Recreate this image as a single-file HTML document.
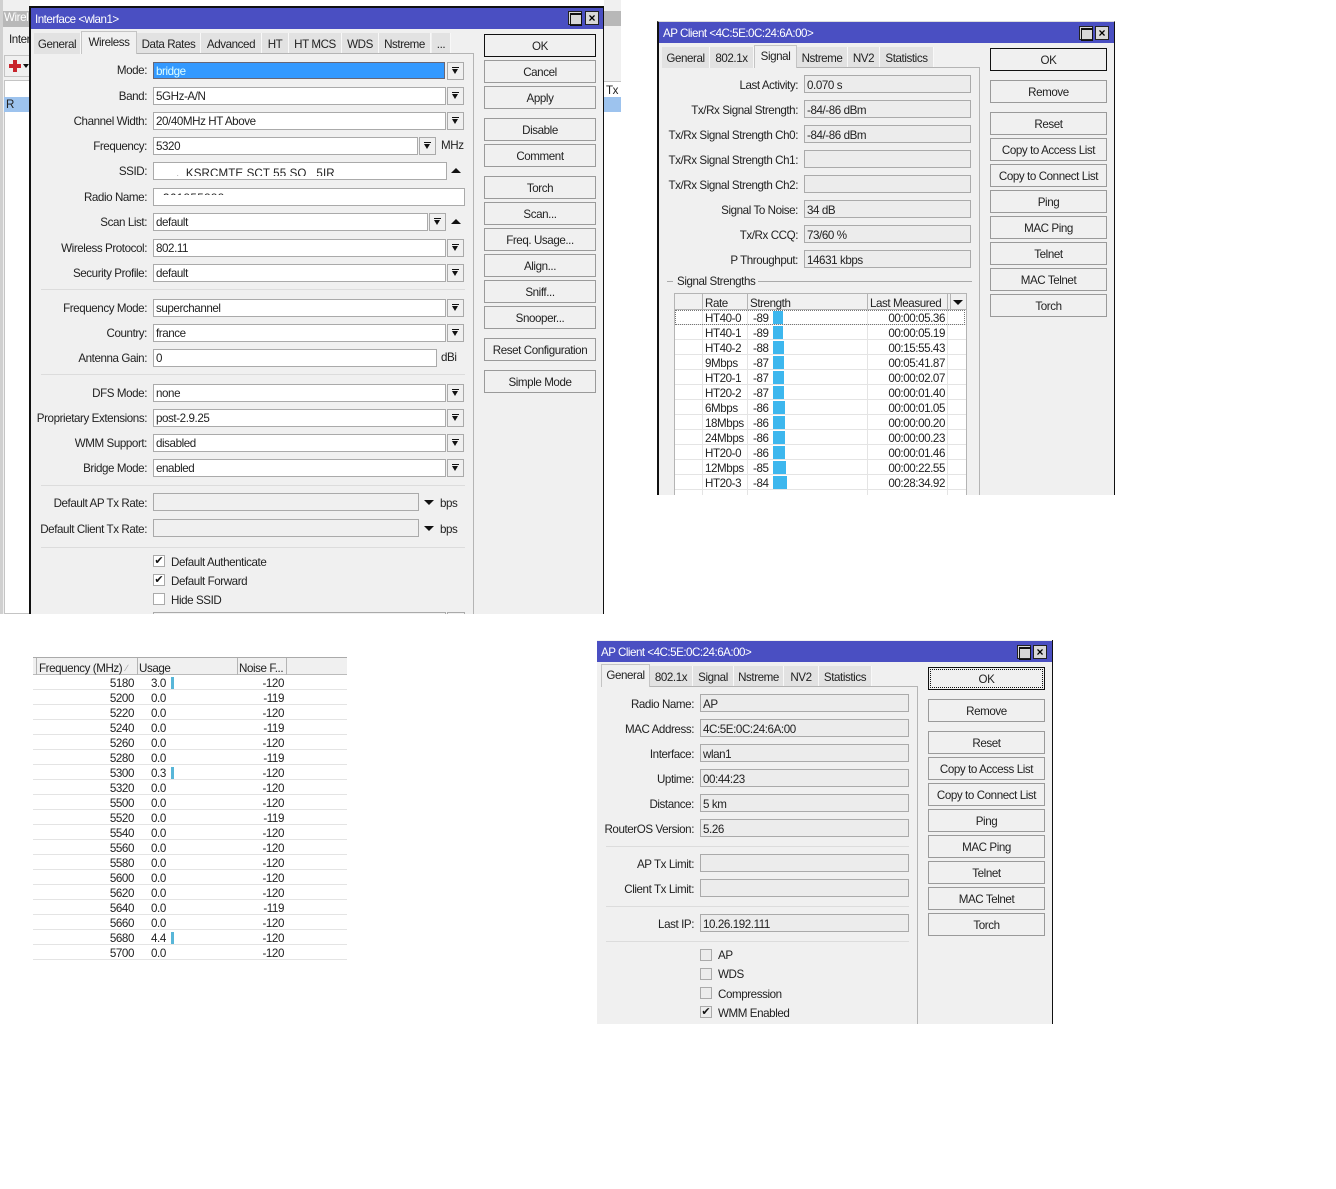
<!DOCTYPE html>
<html><head><meta charset="utf-8"><title>MikroTik Wireless</title>
<style>
html,body{margin:0;padding:0;background:#fff}
#p{position:relative;width:1336px;height:1189px;overflow:hidden;background:#fff;font:11.6px/17px "Liberation Sans",sans-serif;letter-spacing:-.42px;color:#222}
#p div,#p span.a{position:absolute;box-sizing:border-box;white-space:nowrap}
.bg{background:#f0f0f0}
.tb{background:#4a4fc2;color:#fff;padding-left:4px;line-height:24px;font-size:11.6px;letter-spacing:-.5px}
.t{background:#e2e2e2;border-right:1px solid #f8f8f8;text-align:center;line-height:23px;height:21px}
.ta{background:#f0f0f0;text-align:center;line-height:22px;height:23px;border:1px solid #c4c4c4;border-bottom:0;z-index:2}
.l{left:0;text-align:right;height:18px;line-height:20px}
.f{background:#fff;border:1px solid #aaa;height:18px;line-height:17px;padding-left:2px;overflow:hidden}
.r{background:#ececec;border:1px solid #aaa;height:18px;line-height:19px;padding-left:2px;overflow:hidden}
.d{background:#f0f0f0;border:1px solid #aaa;height:18px;width:17px}
.d:before{content:"";position:absolute;left:4px;top:4px;width:7px;height:1px;background:#111}
.d:after{content:"";position:absolute;left:4px;top:6px;border:3.5px solid transparent;border-top:5px solid #111;border-bottom:0}
.up{width:0;height:0;border:5px solid transparent;border-bottom:5px solid #111;border-top:0}
.dn{width:0;height:0;border:5px solid transparent;border-top:5px solid #111;border-bottom:0}
.b{background:#f0f0f0;border:1px solid #9a9a9a;height:23px;line-height:23px;text-align:center;color:#222}
.s{background:#dcdcdc;height:1px}
.v{background:#b4b4b4;width:1px}
.c{width:12px;height:12px;background:#fff;border:1px solid #aaa;font-size:11px;line-height:10px;text-align:center;color:#111;letter-spacing:0}
.w{width:14px;height:14px;background:#d8d8d8;border:1px solid #222}
.w:before{content:"";position:absolute;left:1px;top:1px;width:10px;height:10px;border:1px solid #111;border-top-width:2px}
.x{width:14px;height:14px;background:#d8d8d8;border:1px solid #222;text-align:center;line-height:12px;font-weight:bold;font-size:12px;color:#000;letter-spacing:0}
.rw{height:15px;line-height:15px;background:#fff;border-bottom:1px solid #e4e4e4}
.bar{background:#3db7ee;height:13px;top:1px}
.ub{background:#58b6d8;width:3px;height:12px}
</style></head><body><div id="p">

<!-- background window -->
<div class="bg" style="left:0;top:0;width:30px;height:614px"></div>
<div class="bg" style="left:604px;top:0;width:17px;height:112px"></div>
<div style="left:0;top:11px;width:30px;height:16px;background:#b8b8b8;color:#fff;padding-left:4px;line-height:14px">Wirel</div>
<div style="left:604px;top:11px;width:17px;height:15px;background:#b8b8b8"></div>
<div style="left:0;top:0;width:3px;height:614px;background:#d0d0d0"></div>
<div style="left:9px;top:31px">Inter</div>
<div style="left:4px;top:55px;width:26px;height:22px;background:#f0f0f0;border:1px solid #c4c4c4"></div>
<div style="left:9px;top:64px;width:12px;height:4px;background:#c8242c"></div>
<div style="left:13px;top:60px;width:4px;height:12px;background:#c8242c"></div>
<div class="dn" style="left:23px;top:64px;border-width:3px;border-top-width:4px"></div>
<div style="left:4px;top:80px;width:26px;height:534px;background:#fff;border:1px solid #c4c4c4"></div>
<div style="left:4px;top:97px;width:26px;height:15px;background:#9dc3ee;padding-left:2px;line-height:15px">R</div>
<div style="left:604px;top:81px;width:17px;height:16px;background:#fff;border-top:1px solid #c4c4c4;padding-left:2px">Tx</div>
<div style="left:604px;top:97px;width:17px;height:15px;background:#9dc3ee"></div>

<!-- Interface window -->
<div class="bg" style="left:29px;top:6px;width:575px;height:608px;border:2px solid #111;border-bottom:0;border-right-width:1px;border-left-width:2px"></div>
<div class="tb" style="left:31px;top:8px;width:572px;height:21px;line-height:24px">Interface &lt;wlan1&gt;</div>
<div class="w" style="left:568px;top:11px"></div><div class="x" style="left:585px;top:11px">×</div>
<div class="t" style="left:34px;top:33px;width:47px">General</div>
<div class="ta" style="left:81px;top:31px;width:56px">Wireless</div>
<div class="t" style="left:137px;top:33px;width:64px">Data Rates</div>
<div class="t" style="left:201px;top:33px;width:61px">Advanced</div>
<div class="t" style="left:262px;top:33px;width:27px">HT</div>
<div class="t" style="left:289px;top:33px;width:53px">HT MCS</div>
<div class="t" style="left:342px;top:33px;width:37px">WDS</div>
<div class="t" style="left:379px;top:33px;width:52px">Nstreme</div>
<div class="t" style="left:432px;top:33px;width:19px">...</div>
<div class="s" style="left:137px;top:53px;width:337px;background:#b4b4b4"></div>
<div class="v" style="left:473px;top:53px;height:561px"></div>

<div class="l" style="top:61px;width:147px">Mode:</div>
<div class="f" style="left:153px;top:62px;width:292px;height:17px;background:#3399ff;color:#fff;border-color:#667"><span style="color:#dff">bridge</span></div><div class="d" style="left:447px;top:62px"></div>
<div class="l" style="top:87px;width:147px">Band:</div>
<div class="f" style="left:153px;top:87px;width:293px">5GHz-A/N</div><div class="d" style="left:447px;top:87px"></div>
<div class="l" style="top:112px;width:147px">Channel Width:</div>
<div class="f" style="left:153px;top:112px;width:293px">20/40MHz HT Above</div><div class="d" style="left:447px;top:112px"></div>
<div class="l" style="top:137px;width:147px">Frequency:</div>
<div class="f" style="left:153px;top:137px;width:265px">5320</div><div class="d" style="left:419px;top:137px"></div>
<div style="left:441px;top:137px">MHz</div>
<div class="l" style="top:162px;width:147px">SSID:</div>
<div class="f" style="left:153px;top:162px;width:294px"></div>
<div style="left:176px;top:167px;width:160px;height:9px;overflow:hidden;line-height:13px;letter-spacing:.1px">._KSRCMTE SCT 55 SO_ 5IR</div>
<div class="up" style="left:451px;top:168px"></div>
<div class="l" style="top:188px;width:147px">Radio Name:</div>
<div class="f" style="left:153px;top:188px;width:312px"></div>
<div style="left:163px;top:192px;width:80px;height:3px;overflow:hidden;line-height:13px;letter-spacing:.4px">361855888</div>
<div class="l" style="top:213px;width:147px">Scan List:</div>
<div class="f" style="left:153px;top:213px;width:275px">default</div><div class="d" style="left:429px;top:213px"></div>
<div class="up" style="left:451px;top:219px"></div>
<div class="l" style="top:239px;width:147px">Wireless Protocol:</div>
<div class="f" style="left:153px;top:239px;width:293px">802.11</div><div class="d" style="left:447px;top:239px"></div>
<div class="l" style="top:264px;width:147px">Security Profile:</div>
<div class="f" style="left:153px;top:264px;width:293px">default</div><div class="d" style="left:447px;top:264px"></div>
<div class="s" style="left:41px;top:289px;width:424px"></div>
<div class="l" style="top:299px;width:147px">Frequency Mode:</div>
<div class="f" style="left:153px;top:299px;width:293px">superchannel</div><div class="d" style="left:447px;top:299px"></div>
<div class="l" style="top:324px;width:147px">Country:</div>
<div class="f" style="left:153px;top:324px;width:293px">france</div><div class="d" style="left:447px;top:324px"></div>
<div class="l" style="top:349px;width:147px">Antenna Gain:</div>
<div class="f" style="left:153px;top:349px;width:284px">0</div>
<div style="left:441px;top:349px">dBi</div>
<div class="s" style="left:41px;top:374px;width:424px"></div>
<div class="l" style="top:384px;width:147px">DFS Mode:</div>
<div class="f" style="left:153px;top:384px;width:293px">none</div><div class="d" style="left:447px;top:384px"></div>
<div class="l" style="top:409px;width:147px">Proprietary Extensions:</div>
<div class="f" style="left:153px;top:409px;width:293px">post-2.9.25</div><div class="d" style="left:447px;top:409px"></div>
<div class="l" style="top:434px;width:147px">WMM Support:</div>
<div class="f" style="left:153px;top:434px;width:293px">disabled</div><div class="d" style="left:447px;top:434px"></div>
<div class="l" style="top:459px;width:147px">Bridge Mode:</div>
<div class="f" style="left:153px;top:459px;width:293px">enabled</div><div class="d" style="left:447px;top:459px"></div>
<div class="s" style="left:41px;top:485px;width:424px"></div>
<div class="l" style="top:494px;width:147px">Default AP Tx Rate:</div>
<div class="r" style="left:153px;top:493px;width:266px;background:#f0f0f0"></div>
<div class="dn" style="left:424px;top:500px"></div><div style="left:440px;top:495px">bps</div>
<div class="l" style="top:520px;width:147px">Default Client Tx Rate:</div>
<div class="r" style="left:153px;top:519px;width:266px;background:#f0f0f0"></div>
<div class="dn" style="left:424px;top:526px"></div><div style="left:440px;top:521px">bps</div>
<div class="s" style="left:41px;top:547px;width:424px"></div>
<div class="c" style="left:153px;top:555px">✔</div><div style="left:171px;top:554px">Default Authenticate</div>
<div class="c" style="left:153px;top:574px">✔</div><div style="left:171px;top:573px">Default Forward</div>
<div class="c" style="left:153px;top:593px"></div><div style="left:171px;top:592px">Hide SSID</div>
<div class="f" style="left:153px;top:612px;width:293px;height:2px;border-bottom:0;background:#f0f0f0"></div>
<div class="f" style="left:447px;top:612px;width:18px;height:2px;border-bottom:0;background:#f0f0f0"></div>

<div class="b" style="left:484px;top:34px;width:112px;border-color:#111">OK</div>
<div class="b" style="left:484px;top:60px;width:112px">Cancel</div>
<div class="b" style="left:484px;top:86px;width:112px">Apply</div>
<div class="b" style="left:484px;top:118px;width:112px">Disable</div>
<div class="b" style="left:484px;top:144px;width:112px">Comment</div>
<div class="b" style="left:484px;top:176px;width:112px">Torch</div>
<div class="b" style="left:484px;top:202px;width:112px">Scan...</div>
<div class="b" style="left:484px;top:228px;width:112px">Freq. Usage...</div>
<div class="b" style="left:484px;top:254px;width:112px">Align...</div>
<div class="b" style="left:484px;top:280px;width:112px">Sniff...</div>
<div class="b" style="left:484px;top:306px;width:112px">Snooper...</div>
<div class="b" style="left:484px;top:338px;width:112px">Reset Configuration</div>
<div class="b" style="left:484px;top:370px;width:112px">Simple Mode</div>

<!-- AP Client Signal -->
<div class="bg" style="left:657px;top:21px;width:458px;height:474px;border-left:2px solid #111;border-right:1px solid #111;border-top:1px solid #ddd"></div>
<div class="tb" style="left:659px;top:22px;width:455px;height:21px">AP Client &lt;4C:5E:0C:24:6A:00&gt;</div>
<div class="w" style="left:1079px;top:26px"></div><div class="x" style="left:1095px;top:26px">×</div>
<div class="t" style="left:662px;top:47px;width:48px">General</div>
<div class="t" style="left:710px;top:47px;width:44px">802.1x</div>
<div class="ta" style="left:754px;top:45px;width:43px">Signal</div>
<div class="t" style="left:797px;top:47px;width:51px">Nstreme</div>
<div class="t" style="left:848px;top:47px;width:32px">NV2</div>
<div class="t" style="left:880px;top:47px;width:54px">Statistics</div>
<div class="s" style="left:797px;top:67px;width:183px;background:#b4b4b4"></div>
<div class="v" style="left:979px;top:67px;height:428px"></div>

<div class="l" style="top:76px;width:798px">Last Activity:</div><div class="r" style="left:804px;top:75px;width:167px">0.070 s</div>
<div class="l" style="top:101px;width:798px">Tx/Rx Signal Strength:</div><div class="r" style="left:804px;top:100px;width:167px">-84/-86 dBm</div>
<div class="l" style="top:126px;width:798px">Tx/Rx Signal Strength Ch0:</div><div class="r" style="left:804px;top:125px;width:167px">-84/-86 dBm</div>
<div class="l" style="top:151px;width:798px">Tx/Rx Signal Strength Ch1:</div><div class="r" style="left:804px;top:150px;width:167px"></div>
<div class="l" style="top:176px;width:798px">Tx/Rx Signal Strength Ch2:</div><div class="r" style="left:804px;top:175px;width:167px"></div>
<div class="l" style="top:201px;width:798px">Signal To Noise:</div><div class="r" style="left:804px;top:200px;width:167px">34 dB</div>
<div class="l" style="top:226px;width:798px">Tx/Rx CCQ:</div><div class="r" style="left:804px;top:225px;width:167px">73/60 %</div>
<div class="l" style="top:251px;width:798px">P Throughput:</div><div class="r" style="left:804px;top:250px;width:167px">14631 kbps</div>

<div class="s" style="left:667px;top:281px;width:6px;background:#aaa"></div>
<div style="left:677px;top:273px">Signal Strengths</div>
<div class="s" style="left:758px;top:281px;width:214px;background:#aaa"></div>

<div style="left:674px;top:293px;width:293px;height:202px;background:#fff;border:1px solid #b4b4b4;border-bottom:0"></div>
<div style="left:675px;top:294px;width:291px;height:16px;background:#f0f0f0;border-bottom:1px solid #b4b4b4"></div>
<div class="v" style="left:702px;top:294px;height:16px"></div>
<div class="v" style="left:747px;top:294px;height:16px"></div>
<div class="v" style="left:867px;top:294px;height:16px"></div>
<div class="v" style="left:947px;top:294px;height:16px"></div>
<div class="v" style="left:950px;top:294px;height:16px"></div>
<div style="left:705px;top:295px">Rate</div>
<div style="left:750px;top:295px">Strength</div>
<div style="left:870px;top:295px">Last Measured</div>
<div class="dn" style="left:953px;top:300px"></div>

<div class="rw" style="left:675px;top:310px;width:291px"></div>
<div class="rw" style="left:675px;top:325px;width:291px"></div>
<div class="rw" style="left:675px;top:340px;width:291px"></div>
<div class="rw" style="left:675px;top:355px;width:291px"></div>
<div class="rw" style="left:675px;top:370px;width:291px"></div>
<div class="rw" style="left:675px;top:385px;width:291px"></div>
<div class="rw" style="left:675px;top:400px;width:291px"></div>
<div class="rw" style="left:675px;top:415px;width:291px"></div>
<div class="rw" style="left:675px;top:430px;width:291px"></div>
<div class="rw" style="left:675px;top:445px;width:291px"></div>
<div class="rw" style="left:675px;top:460px;width:291px"></div>
<div class="rw" style="left:675px;top:475px;width:291px"></div>
<div class="v" style="left:702px;top:310px;height:185px;background:#e4e4e4"></div>
<div class="v" style="left:747px;top:310px;height:185px;background:#e4e4e4"></div>
<div class="v" style="left:867px;top:310px;height:185px;background:#e4e4e4"></div>
<div class="v" style="left:947px;top:310px;height:185px;background:#e4e4e4"></div>
<div style="left:675px;top:310px;width:290px;height:15px;border:1px dotted #777"></div>

<div style="left:705px;top:310px">HT40-0</div><div style="left:753px;top:310px">-89</div><div class="bar" style="left:773px;top:311px;width:10px"></div><div style="left:845px;width:100px;text-align:right;top:310px">00:00:05.36</div>
<div style="left:705px;top:325px">HT40-1</div><div style="left:753px;top:325px">-89</div><div class="bar" style="left:773px;top:326px;width:10px"></div><div style="left:845px;width:100px;text-align:right;top:325px">00:00:05.19</div>
<div style="left:705px;top:340px">HT40-2</div><div style="left:753px;top:340px">-88</div><div class="bar" style="left:773px;top:341px;width:11px"></div><div style="left:845px;width:100px;text-align:right;top:340px">00:15:55.43</div>
<div style="left:705px;top:355px">9Mbps</div><div style="left:753px;top:355px">-87</div><div class="bar" style="left:773px;top:356px;width:11px"></div><div style="left:845px;width:100px;text-align:right;top:355px">00:05:41.87</div>
<div style="left:705px;top:370px">HT20-1</div><div style="left:753px;top:370px">-87</div><div class="bar" style="left:773px;top:371px;width:11px"></div><div style="left:845px;width:100px;text-align:right;top:370px">00:00:02.07</div>
<div style="left:705px;top:385px">HT20-2</div><div style="left:753px;top:385px">-87</div><div class="bar" style="left:773px;top:386px;width:11px"></div><div style="left:845px;width:100px;text-align:right;top:385px">00:00:01.40</div>
<div style="left:705px;top:400px">6Mbps</div><div style="left:753px;top:400px">-86</div><div class="bar" style="left:773px;top:401px;width:12px"></div><div style="left:845px;width:100px;text-align:right;top:400px">00:00:01.05</div>
<div style="left:705px;top:415px">18Mbps</div><div style="left:753px;top:415px">-86</div><div class="bar" style="left:773px;top:416px;width:12px"></div><div style="left:845px;width:100px;text-align:right;top:415px">00:00:00.20</div>
<div style="left:705px;top:430px">24Mbps</div><div style="left:753px;top:430px">-86</div><div class="bar" style="left:773px;top:431px;width:12px"></div><div style="left:845px;width:100px;text-align:right;top:430px">00:00:00.23</div>
<div style="left:705px;top:445px">HT20-0</div><div style="left:753px;top:445px">-86</div><div class="bar" style="left:773px;top:446px;width:12px"></div><div style="left:845px;width:100px;text-align:right;top:445px">00:00:01.46</div>
<div style="left:705px;top:460px">12Mbps</div><div style="left:753px;top:460px">-85</div><div class="bar" style="left:773px;top:461px;width:13px"></div><div style="left:845px;width:100px;text-align:right;top:460px">00:00:22.55</div>
<div style="left:705px;top:475px">HT20-3</div><div style="left:753px;top:475px">-84</div><div class="bar" style="left:773px;top:476px;width:14px"></div><div style="left:845px;width:100px;text-align:right;top:475px">00:28:34.92</div>

<div class="b" style="left:990px;top:48px;width:117px;border-color:#111">OK</div>
<div class="b" style="left:990px;top:80px;width:117px">Remove</div>
<div class="b" style="left:990px;top:112px;width:117px">Reset</div>
<div class="b" style="left:990px;top:138px;width:117px">Copy to Access List</div>
<div class="b" style="left:990px;top:164px;width:117px">Copy to Connect List</div>
<div class="b" style="left:990px;top:190px;width:117px">Ping</div>
<div class="b" style="left:990px;top:216px;width:117px">MAC Ping</div>
<div class="b" style="left:990px;top:242px;width:117px">Telnet</div>
<div class="b" style="left:990px;top:268px;width:117px">MAC Telnet</div>
<div class="b" style="left:990px;top:294px;width:117px">Torch</div>

<!-- Frequency usage -->
<div style="left:33px;top:657px;width:314px;height:18px;background:#f0f0f0;border-top:1px solid #aaa;border-bottom:1px solid #bbb"></div>
<div class="v" style="left:36px;top:658px;height:17px"></div>
<div class="v" style="left:137px;top:658px;height:17px"></div>
<div class="v" style="left:237px;top:658px;height:17px"></div>
<div class="v" style="left:286px;top:658px;height:17px"></div>
<div style="left:39px;top:660px">Frequency (MHz)</div><div style="left:126px;top:660px;color:#999;font-size:9px">∕</div>
<div style="left:139px;top:660px">Usage</div>
<div style="left:239px;top:660px">Noise F...</div>
<div class="v" style="left:137px;top:675px;height:285px;background:#e4e4e4"></div>
<div class="v" style="left:237px;top:675px;height:285px;background:#e4e4e4"></div>

<div class="rw" style="left:33px;top:675px;width:314px"></div><div style="left:84px;width:50px;text-align:right;top:675px">5180</div><div style="left:151px;top:675px">3.0</div><div class="ub" style="left:171px;top:677px"></div><div style="left:234px;width:50px;text-align:right;top:675px">-120</div>
<div class="rw" style="left:33px;top:690px;width:314px"></div><div style="left:84px;width:50px;text-align:right;top:690px">5200</div><div style="left:151px;top:690px">0.0</div><div style="left:234px;width:50px;text-align:right;top:690px">-119</div>
<div class="rw" style="left:33px;top:705px;width:314px"></div><div style="left:84px;width:50px;text-align:right;top:705px">5220</div><div style="left:151px;top:705px">0.0</div><div style="left:234px;width:50px;text-align:right;top:705px">-120</div>
<div class="rw" style="left:33px;top:720px;width:314px"></div><div style="left:84px;width:50px;text-align:right;top:720px">5240</div><div style="left:151px;top:720px">0.0</div><div style="left:234px;width:50px;text-align:right;top:720px">-119</div>
<div class="rw" style="left:33px;top:735px;width:314px"></div><div style="left:84px;width:50px;text-align:right;top:735px">5260</div><div style="left:151px;top:735px">0.0</div><div style="left:234px;width:50px;text-align:right;top:735px">-120</div>
<div class="rw" style="left:33px;top:750px;width:314px"></div><div style="left:84px;width:50px;text-align:right;top:750px">5280</div><div style="left:151px;top:750px">0.0</div><div style="left:234px;width:50px;text-align:right;top:750px">-119</div>
<div class="rw" style="left:33px;top:765px;width:314px"></div><div style="left:84px;width:50px;text-align:right;top:765px">5300</div><div style="left:151px;top:765px">0.3</div><div class="ub" style="left:171px;top:767px"></div><div style="left:234px;width:50px;text-align:right;top:765px">-120</div>
<div class="rw" style="left:33px;top:780px;width:314px"></div><div style="left:84px;width:50px;text-align:right;top:780px">5320</div><div style="left:151px;top:780px">0.0</div><div style="left:234px;width:50px;text-align:right;top:780px">-120</div>
<div class="rw" style="left:33px;top:795px;width:314px"></div><div style="left:84px;width:50px;text-align:right;top:795px">5500</div><div style="left:151px;top:795px">0.0</div><div style="left:234px;width:50px;text-align:right;top:795px">-120</div>
<div class="rw" style="left:33px;top:810px;width:314px"></div><div style="left:84px;width:50px;text-align:right;top:810px">5520</div><div style="left:151px;top:810px">0.0</div><div style="left:234px;width:50px;text-align:right;top:810px">-119</div>
<div class="rw" style="left:33px;top:825px;width:314px"></div><div style="left:84px;width:50px;text-align:right;top:825px">5540</div><div style="left:151px;top:825px">0.0</div><div style="left:234px;width:50px;text-align:right;top:825px">-120</div>
<div class="rw" style="left:33px;top:840px;width:314px"></div><div style="left:84px;width:50px;text-align:right;top:840px">5560</div><div style="left:151px;top:840px">0.0</div><div style="left:234px;width:50px;text-align:right;top:840px">-120</div>
<div class="rw" style="left:33px;top:855px;width:314px"></div><div style="left:84px;width:50px;text-align:right;top:855px">5580</div><div style="left:151px;top:855px">0.0</div><div style="left:234px;width:50px;text-align:right;top:855px">-120</div>
<div class="rw" style="left:33px;top:870px;width:314px"></div><div style="left:84px;width:50px;text-align:right;top:870px">5600</div><div style="left:151px;top:870px">0.0</div><div style="left:234px;width:50px;text-align:right;top:870px">-120</div>
<div class="rw" style="left:33px;top:885px;width:314px"></div><div style="left:84px;width:50px;text-align:right;top:885px">5620</div><div style="left:151px;top:885px">0.0</div><div style="left:234px;width:50px;text-align:right;top:885px">-120</div>
<div class="rw" style="left:33px;top:900px;width:314px"></div><div style="left:84px;width:50px;text-align:right;top:900px">5640</div><div style="left:151px;top:900px">0.0</div><div style="left:234px;width:50px;text-align:right;top:900px">-119</div>
<div class="rw" style="left:33px;top:915px;width:314px"></div><div style="left:84px;width:50px;text-align:right;top:915px">5660</div><div style="left:151px;top:915px">0.0</div><div style="left:234px;width:50px;text-align:right;top:915px">-120</div>
<div class="rw" style="left:33px;top:930px;width:314px"></div><div style="left:84px;width:50px;text-align:right;top:930px">5680</div><div style="left:151px;top:930px">4.4</div><div class="ub" style="left:171px;top:932px"></div><div style="left:234px;width:50px;text-align:right;top:930px">-120</div>
<div class="rw" style="left:33px;top:945px;width:314px"></div><div style="left:84px;width:50px;text-align:right;top:945px">5700</div><div style="left:151px;top:945px">0.0</div><div style="left:234px;width:50px;text-align:right;top:945px">-120</div>

<!-- AP Client General -->
<div class="bg" style="left:597px;top:640px;width:456px;height:384px;border-right:1px solid #111"></div>
<div class="tb" style="left:597px;top:641px;width:455px;height:21px">AP Client &lt;4C:5E:0C:24:6A:00&gt;</div>
<div class="w" style="left:1017px;top:645px"></div><div class="x" style="left:1033px;top:645px">×</div>
<div class="ta" style="left:601px;top:664px;width:49px">General</div>
<div class="t" style="left:650px;top:666px;width:43px">802.1x</div>
<div class="t" style="left:693px;top:666px;width:41px">Signal</div>
<div class="t" style="left:734px;top:666px;width:50px">Nstreme</div>
<div class="t" style="left:784px;top:666px;width:35px">NV2</div>
<div class="t" style="left:819px;top:666px;width:53px">Statistics</div>
<div class="s" style="left:650px;top:686px;width:268px;background:#b4b4b4"></div>
<div class="v" style="left:917px;top:686px;height:338px"></div>

<div class="l" style="top:695px;width:694px">Radio Name:</div><div class="r" style="left:700px;top:694px;width:209px">AP</div>
<div class="l" style="top:720px;width:694px">MAC Address:</div><div class="r" style="left:700px;top:719px;width:209px">4C:5E:0C:24:6A:00</div>
<div class="l" style="top:745px;width:694px">Interface:</div><div class="r" style="left:700px;top:744px;width:209px">wlan1</div>
<div class="l" style="top:770px;width:694px">Uptime:</div><div class="r" style="left:700px;top:769px;width:209px">00:44:23</div>
<div class="l" style="top:795px;width:694px">Distance:</div><div class="r" style="left:700px;top:794px;width:209px">5 km</div>
<div class="l" style="top:820px;width:694px">RouterOS Version:</div><div class="r" style="left:700px;top:819px;width:209px">5.26</div>
<div class="s" style="left:606px;top:846px;width:303px"></div>
<div class="l" style="top:855px;width:694px">AP Tx Limit:</div><div class="r" style="left:700px;top:854px;width:209px"></div>
<div class="l" style="top:880px;width:694px">Client Tx Limit:</div><div class="r" style="left:700px;top:879px;width:209px"></div>
<div class="s" style="left:606px;top:906px;width:303px"></div>
<div class="l" style="top:915px;width:694px">Last IP:</div><div class="r" style="left:700px;top:914px;width:209px">10.26.192.111</div>
<div class="s" style="left:606px;top:941px;width:303px"></div>
<div class="c" style="left:700px;top:949px;background:#ececec"></div><div style="left:718px;top:947px">AP</div>
<div class="c" style="left:700px;top:968px;background:#ececec"></div><div style="left:718px;top:966px">WDS</div>
<div class="c" style="left:700px;top:987px;background:#ececec"></div><div style="left:718px;top:986px">Compression</div>
<div class="c" style="left:700px;top:1006px;background:#ececec">✔</div><div style="left:718px;top:1005px">WMM Enabled</div>

<div class="b" style="left:928px;top:667px;width:117px;border-color:#111;outline:1px dotted #111;outline-offset:-3px">OK</div>
<div class="b" style="left:928px;top:699px;width:117px">Remove</div>
<div class="b" style="left:928px;top:731px;width:117px">Reset</div>
<div class="b" style="left:928px;top:757px;width:117px">Copy to Access List</div>
<div class="b" style="left:928px;top:783px;width:117px">Copy to Connect List</div>
<div class="b" style="left:928px;top:809px;width:117px">Ping</div>
<div class="b" style="left:928px;top:835px;width:117px">MAC Ping</div>
<div class="b" style="left:928px;top:861px;width:117px">Telnet</div>
<div class="b" style="left:928px;top:887px;width:117px">MAC Telnet</div>
<div class="b" style="left:928px;top:913px;width:117px">Torch</div>

</div></body></html>
